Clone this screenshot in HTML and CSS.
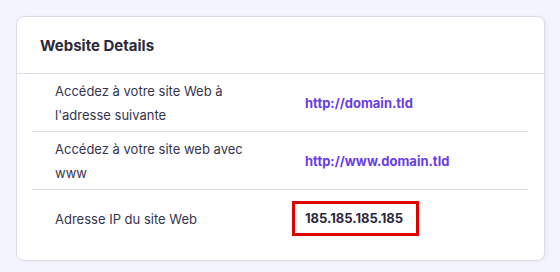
FILE: index.html
```html
<!DOCTYPE html>
<html lang="fr">
<head>
    <meta charset="UTF-8">
    <meta name="viewport" content="width=device-width, initial-scale=1.0">
    <title>Website Details</title>
    <link rel="stylesheet" href="styles.css">
</head>
<body>
    <div class="card">
        <h2 class="card-title">Website Details</h2>
        <div class="details">
            <div class="row">
                <div class="label">Accédez à votre site Web à l'adresse suivante</div>
                <div class="value"><a href="#">http://domain.tld</a></div>
            </div>
            <div class="row">
                <div class="label">Accédez à votre site web avec www</div>
                <div class="value"><a href="#">http://www.domain.tld</a></div>
            </div>
            <div class="row">
                <div class="label">Adresse IP du site Web</div>
                <div class="value"><span class="ip">185.185.185.185</span></div>
            </div>
        </div>
    </div>
</body>
</html>
```

FILE: styles.css
```css
body {
    font-family: Inter, 'Noto Sans', sans-serif;
    background-color: #f4f5fc;
    margin: 0;
    padding: 16px 15px 14px 16px;
    color: #36344d;
}
.card {
    background: #fff;
    border: 1px solid #dcdde6;
    border-radius: 8px;
    box-shadow: 2px 0 3px rgba(60, 60, 120, 0.06);
}
.card-title {
    margin: 0;
    padding: 0 23px;
    height: 56px;
    display: flex;
    align-items: center;
    font-size: 15px;
    font-weight: 700;
    color: #2b2a3a;
    border-bottom: 1px solid #dcdde6;
}
.details {
    padding: 0 16px 13px 15px;
}
.row {
    display: flex;
    align-items: center;
    min-height: 57px;
    border-bottom: 1px solid #dcdde6;
}
.row:last-child {
    border-bottom: none;
}
.label {
    flex: 0 0 190px;
    padding: 0 47px 0 23px;
    font-size: 13px;
    line-height: 24px;
    color: #36344d;
}
.value {
    padding-left: 13px;
    font-size: 13px;
}
.value a {
    color: #673de6;
    font-weight: 700;
    text-decoration: none;
}
.ip {
    display: inline-block;
    margin-left: -13px;
    border: 3px solid #e00000;
    padding: 5px 13px 5px 10px;
    line-height: 19px;
    font-weight: 700;
    color: #2b2a3a;
}
```
